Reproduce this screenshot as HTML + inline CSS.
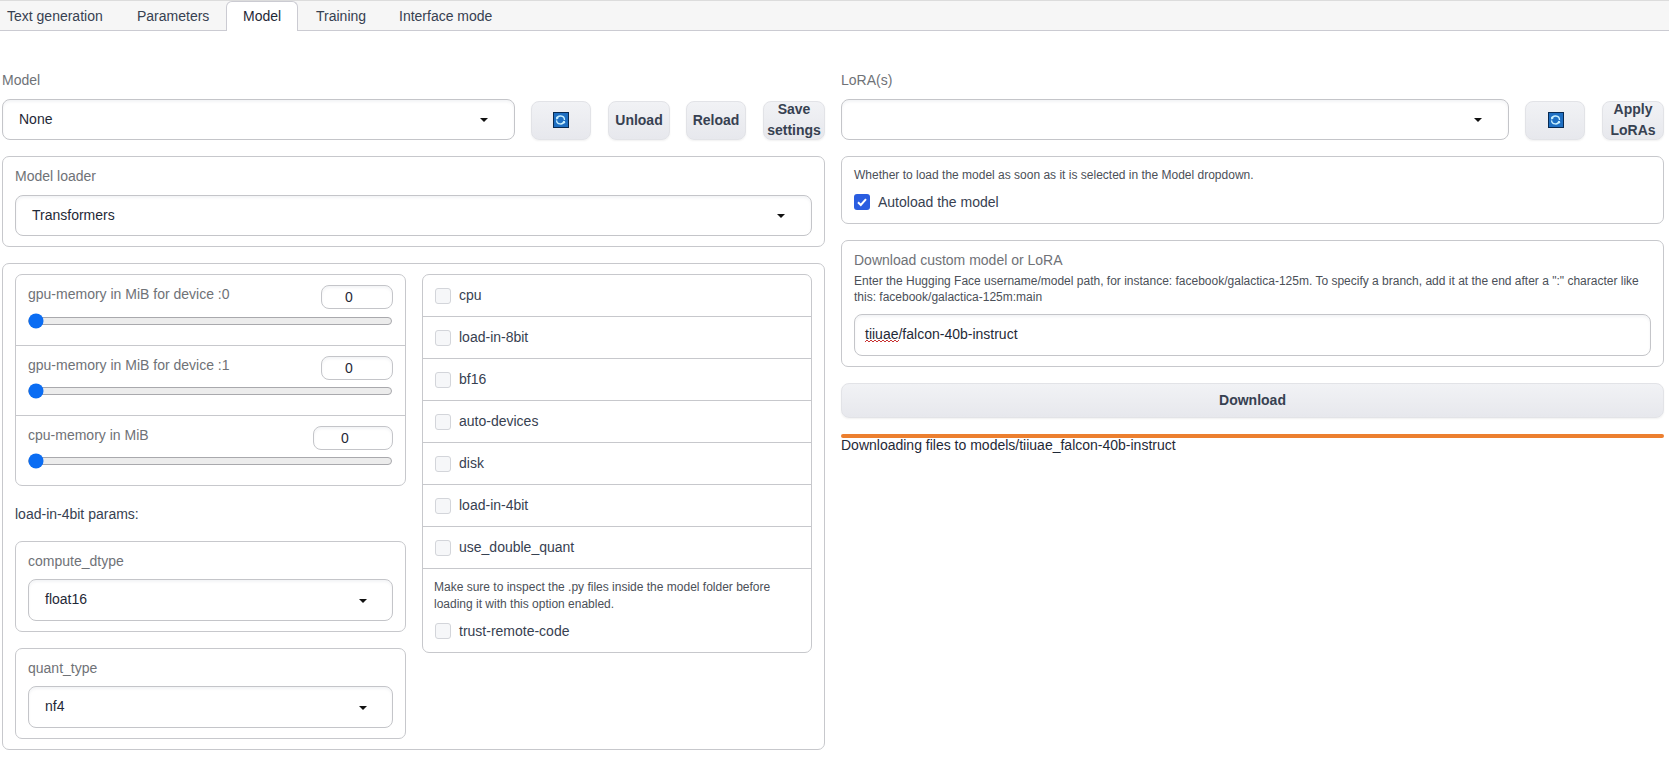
<!DOCTYPE html>
<html><head><meta charset="utf-8">
<style>
*{box-sizing:border-box;margin:0;padding:0}
html,body{width:1669px;height:765px;overflow:hidden;background:#fff;font-family:"Liberation Sans",sans-serif;font-size:14px;color:#1f2937}
.a{position:absolute}
.t{position:absolute;white-space:nowrap;line-height:1}
.box{position:absolute;border:1px solid #c7c8cc;border-radius:7px;background:#fff}
.dd{position:absolute;border:1px solid #c4c5c9;border-radius:8px;background:#fff;box-shadow:inset 0 2px 3px rgba(20,30,70,.05)}
.arr{position:absolute;width:0;height:0;border-left:4px solid transparent;border-right:4px solid transparent;border-top:4.5px solid #111}
.btn{position:absolute;border-radius:8px;border:1px solid #e2e3e7;background:linear-gradient(180deg,#f1f2f5,#e7e8ed);box-shadow:0 1px 2px rgba(0,0,0,.06);font-weight:bold;color:#374151;text-align:center}
.btx{position:absolute;font-weight:bold;color:#374151;text-align:center;line-height:21px;white-space:nowrap}
.lbl{color:#6f7277}
.cb{position:absolute;width:16px;height:16px;border:1px solid #d3d5da;border-radius:3px;background:#f6f7f9}
.sep{position:absolute;height:1px;background:#c7c8cc}
.num{position:absolute;border:1px solid #c4c5c9;border-radius:8px;background:#fff;box-shadow:inset 0 2px 3px rgba(20,30,70,.05);text-align:center}
.track{position:absolute;height:8px;border:1px solid #a9a9ad;border-radius:4px;background:#ececec}
.thumb{position:absolute;width:15px;height:15px;border-radius:50%;background:#0b6df3;transform:translate(0.5px,0.4px)}
</style></head><body>

<!-- tab bar -->
<div class="a" style="left:0;top:0;width:1669px;height:31px;background:#f6f6f6;border-top:1px solid #dcdcdc;border-bottom:1px solid #cbcbd2"></div>
<div class="a" style="left:226px;top:1px;width:72px;height:30px;background:#fff;border:1px solid #cbcbd2;border-bottom:none;border-radius:6px 6px 0 0"></div>
<div class="t" style="left:7px;top:9px;color:#374151">Text generation</div>
<div class="t" style="left:137px;top:9px;color:#374151">Parameters</div>
<div class="t" style="left:243px;top:9px;color:#1f2937">Model</div>
<div class="t" style="left:316px;top:9px;color:#374151">Training</div>
<div class="t" style="left:399px;top:9px;color:#374151">Interface mode</div>

<!-- Model row -->
<div class="t lbl" style="left:2px;top:73px">Model</div>
<div class="dd" style="left:2px;top:99px;width:513px;height:41px"></div>
<div class="t" style="left:19px;top:112px">None</div>
<div class="arr" style="left:480px;top:118px"></div>

<div class="btn" style="left:531px;top:101px;width:60px;height:39px"></div>
<svg class="a" style="left:553px;top:112px" width="16" height="16" viewBox="0 0 16 16">
<rect x="0.5" y="0.5" width="15" height="15" fill="#1f6fc2" stroke="#082a52"/>
<path d="M3.56 7.3 A4 4 0 0 1 11.5 8" fill="none" stroke="#c8f0ff" stroke-width="1.3"/>
<path d="M11.36 9.04 A4 4 0 0 1 3.52 8.35" fill="none" stroke="#c8f0ff" stroke-width="1.3"/>
<circle cx="4.3" cy="5.7" r="1.2" fill="#c8f0ff"/>
<circle cx="10.9" cy="10.3" r="1.2" fill="#c8f0ff"/>
</svg>
<div class="btn" style="left:608px;top:101px;width:62px;height:39px;line-height:37px">Unload</div>
<div class="btn" style="left:686px;top:101px;width:60px;height:39px;line-height:37px">Reload</div>
<div class="btn" style="left:763px;top:101px;width:62px;height:39px"></div><div class="btx" style="left:763px;top:99px;width:62px">Save<br>settings</div>

<div class="t lbl" style="left:841px;top:73px">LoRA(s)</div>
<div class="dd" style="left:841px;top:99px;width:668px;height:41px"></div>
<div class="arr" style="left:1474px;top:118px"></div>
<div class="btn" style="left:1525px;top:101px;width:60px;height:39px"></div>
<svg class="a" style="left:1548px;top:112px" width="16" height="16" viewBox="0 0 16 16">
<rect x="0.5" y="0.5" width="15" height="15" fill="#1f6fc2" stroke="#082a52"/>
<path d="M3.56 7.3 A4 4 0 0 1 11.5 8" fill="none" stroke="#c8f0ff" stroke-width="1.3"/>
<path d="M11.36 9.04 A4 4 0 0 1 3.52 8.35" fill="none" stroke="#c8f0ff" stroke-width="1.3"/>
<circle cx="4.3" cy="5.7" r="1.2" fill="#c8f0ff"/>
<circle cx="10.9" cy="10.3" r="1.2" fill="#c8f0ff"/>
</svg>
<div class="btn" style="left:1602px;top:101px;width:62px;height:39px"></div><div class="btx" style="left:1602px;top:99px;width:62px">Apply<br>LoRAs</div>

<!-- Model loader -->
<div class="box" style="left:2px;top:156px;width:823px;height:91px"></div>
<div class="t lbl" style="left:15px;top:169px">Model loader</div>
<div class="dd" style="left:15px;top:195px;width:797px;height:41px"></div>
<div class="t" style="left:32px;top:208px">Transformers</div>
<div class="arr" style="left:777px;top:214px"></div>

<!-- params box -->
<div class="box" style="left:2px;top:263px;width:823px;height:487px"></div>

<!-- sliders -->
<div class="box" style="left:15px;top:274px;width:391px;height:212px"></div>
<div class="sep" style="left:16px;top:345px;width:389px"></div>
<div class="sep" style="left:16px;top:415px;width:389px"></div>

<div class="t lbl" style="left:28px;top:287px">gpu-memory in MiB for device :0</div>
<div class="num" style="left:321px;top:285px;width:72px;height:24px"></div>
<div class="t" style="left:345px;top:290px">0</div>
<div class="track" style="left:28px;top:317px;width:364px"></div>
<div class="thumb" style="left:28px;top:313px"></div>

<div class="t lbl" style="left:28px;top:358px">gpu-memory in MiB for device :1</div>
<div class="num" style="left:321px;top:356px;width:72px;height:24px"></div>
<div class="t" style="left:345px;top:361px">0</div>
<div class="track" style="left:28px;top:387px;width:364px"></div>
<div class="thumb" style="left:28px;top:383px"></div>

<div class="t lbl" style="left:28px;top:428px">cpu-memory in MiB</div>
<div class="num" style="left:313px;top:426px;width:80px;height:24px"></div>
<div class="t" style="left:341px;top:431px">0</div>
<div class="track" style="left:28px;top:457px;width:364px"></div>
<div class="thumb" style="left:28px;top:453px"></div>

<div class="t" style="left:15px;top:507px;color:#374151">load-in-4bit params:</div>

<div class="box" style="left:15px;top:541px;width:391px;height:91px"></div>
<div class="t lbl" style="left:28px;top:554px">compute_dtype</div>
<div class="dd" style="left:28px;top:579px;width:365px;height:42px"></div>
<div class="t" style="left:45px;top:592px">float16</div>
<div class="arr" style="left:359px;top:599px"></div>

<div class="box" style="left:15px;top:648px;width:391px;height:91px"></div>
<div class="t lbl" style="left:28px;top:661px">quant_type</div>
<div class="dd" style="left:28px;top:686px;width:365px;height:42px"></div>
<div class="t" style="left:45px;top:699px">nf4</div>
<div class="arr" style="left:359px;top:706px"></div>

<!-- checkbox group -->
<div class="box" style="left:422px;top:274px;width:390px;height:379px"></div>
<div class="sep" style="left:423px;top:316px;width:388px"></div>
<div class="sep" style="left:423px;top:358px;width:388px"></div>
<div class="sep" style="left:423px;top:400px;width:388px"></div>
<div class="sep" style="left:423px;top:442px;width:388px"></div>
<div class="sep" style="left:423px;top:484px;width:388px"></div>
<div class="sep" style="left:423px;top:526px;width:388px"></div>
<div class="sep" style="left:423px;top:568px;width:388px"></div>

<div class="cb" style="left:435px;top:288px"></div><div class="t" style="left:459px;top:288px;color:#374151">cpu</div>
<div class="cb" style="left:435px;top:330px"></div><div class="t" style="left:459px;top:330px;color:#374151">load-in-8bit</div>
<div class="cb" style="left:435px;top:372px"></div><div class="t" style="left:459px;top:372px;color:#374151">bf16</div>
<div class="cb" style="left:435px;top:414px"></div><div class="t" style="left:459px;top:414px;color:#374151">auto-devices</div>
<div class="cb" style="left:435px;top:456px"></div><div class="t" style="left:459px;top:456px;color:#374151">disk</div>
<div class="cb" style="left:435px;top:498px"></div><div class="t" style="left:459px;top:498px;color:#374151">load-in-4bit</div>
<div class="cb" style="left:435px;top:540px"></div><div class="t" style="left:459px;top:540px;color:#374151">use_double_quant</div>
<div class="t" style="left:434px;top:581px;font-size:12px;color:#4b5058">Make sure to inspect the .py files inside the model folder before</div>
<div class="t" style="left:434px;top:598px;font-size:12px;color:#4b5058">loading it with this option enabled.</div>
<div class="cb" style="left:435px;top:623px"></div><div class="t" style="left:459px;top:624px;color:#374151">trust-remote-code</div>

<!-- right column -->
<div class="box" style="left:841px;top:156px;width:823px;height:68px"></div>
<div class="t" style="left:854px;top:169px;font-size:12px;color:#4b5058">Whether to load the model as soon as it is selected in the Model dropdown.</div>
<div class="a" style="left:854px;top:194px;width:16px;height:16px;border-radius:3px;background:#2a5de0"></div>
<svg class="a" style="left:854px;top:194px" width="16" height="16" viewBox="0 0 16 16"><path d="M4 8.2 L6.8 11 L12 5.2" fill="none" stroke="#fff" stroke-width="2"/></svg>
<div class="t" style="left:878px;top:195px;color:#374151">Autoload the model</div>

<div class="box" style="left:841px;top:240px;width:823px;height:127px"></div>
<div class="t lbl" style="left:854px;top:253px">Download custom model or LoRA</div>
<div class="t" style="left:854px;top:275px;font-size:12px;color:#4b5058">Enter the Hugging Face username/model path, for instance: facebook/galactica-125m. To specify a branch, add it at the end after a ":" character like</div>
<div class="t" style="left:854px;top:291px;font-size:12px;color:#4b5058">this: facebook/galactica-125m:main</div>
<div class="dd" style="left:854px;top:314px;width:797px;height:42px"></div>
<div class="t" style="left:865px;top:327px">tiiuae/falcon-40b-instruct</div>
<svg class="a" style="left:865px;top:339px" width="34" height="4" viewBox="0 0 34 4"><path d="M0 3 L2 1 L4 3 L6 1 L8 3 L10 1 L12 3 L14 1 L16 3 L18 1 L20 3 L22 1 L24 3 L26 1 L28 3 L30 1 L32 3 L34 1" fill="none" stroke="#c83434" stroke-width="1"/></svg>

<div class="btn" style="left:841px;top:383px;width:823px;height:35px;line-height:33px">Download</div>
<div class="a" style="left:841px;top:434px;width:823px;height:4px;background:#ec7f2f;border-radius:2px"></div>
<div class="t" style="left:841px;top:438px;color:#1f2937">Downloading files to models/tiiuae_falcon-40b-instruct</div>

</body></html>
